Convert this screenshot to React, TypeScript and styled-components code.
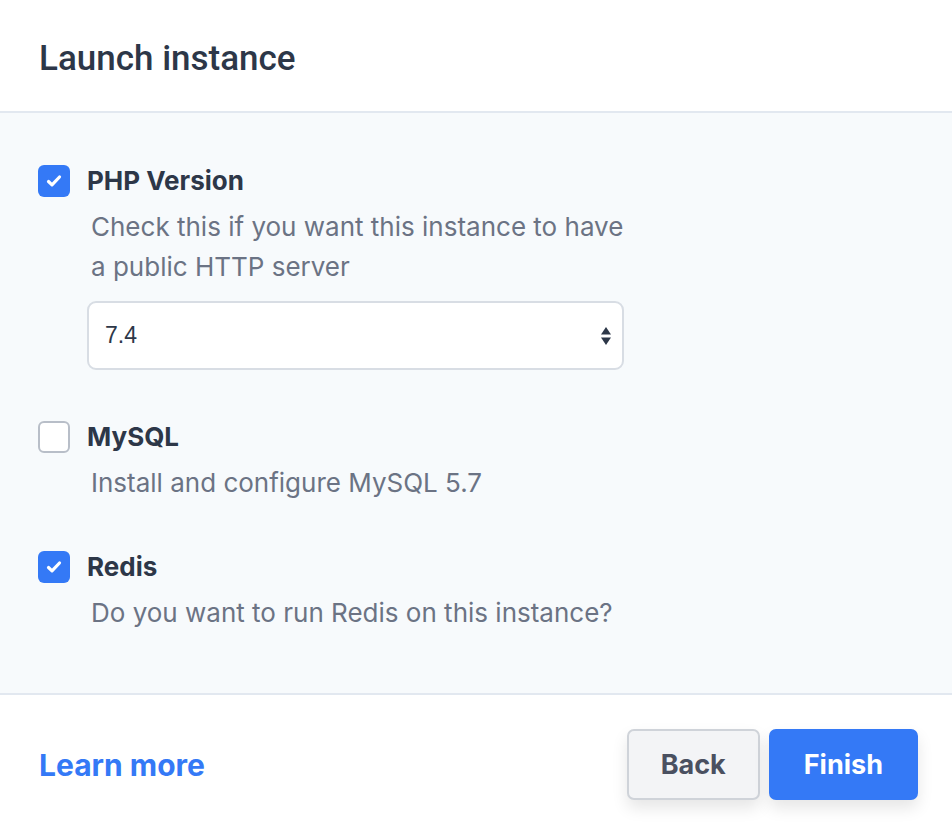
import React from "react";
import styled, { createGlobalStyle } from "styled-components";

const Global = createGlobalStyle`
  html, body { margin: 0; padding: 0; background: #ffffff; }
  body { font-family: Inter, "Noto Sans", sans-serif; }
  * { box-sizing: border-box; }
`;

const Panel = styled.div`
  width: 952px;
  height: 828px;
  display: flex;
  flex-direction: column;
  background: #ffffff;
`;

const Header = styled.header`
  height: 113px;
  padding: 0 39px;
  display: flex;
  align-items: center;
  border-bottom: 2px solid #e2e8f0;
`;

const Title = styled.h1`
  margin: 0;
  padding-top: 5px;
  font-family: Roboto, "Noto Sans", sans-serif;
  font-weight: 500;
  font-size: 35px;
  color: #2d3748;
`;

const Body = styled.main`
  flex: 1;
  background: #f7fafc;
  border-bottom: 2px solid #e2e8f0;
  padding: 52px 38px 0;
  display: flex;
  flex-direction: column;
  gap: 48px;
`;

const Option = styled.div`
  display: grid;
  grid-template-columns: 32px 1fr;
  column-gap: 17px;
`;

const Box = styled.span<{ $checked: boolean }>`
  width: 32px;
  height: 32px;
  border-radius: 6px;
  display: flex;
  align-items: center;
  justify-content: center;
  background: ${(p) => (p.$checked ? "#3479f6" : "#ffffff")};
  border: ${(p) => (p.$checked ? "none" : "2px solid #b8bec8")};
`;

const Label = styled.div`
  font-weight: 700;
  font-size: 26px;
  line-height: 32px;
  color: #2d3748;
`;

const Desc = styled.div`
  grid-column: 2;
  margin-top: 10px;
  padding-left: 4px;
  font-size: 26px;
  line-height: 40px;
  color: #6b7384;
  max-width: 545px;
`;

const SelectBox = styled.div`
  grid-column: 2;
  margin-top: 14px;
  margin-bottom: 3px;
  width: 537px;
  height: 69px;
  border: 2px solid #d8dde4;
  border-radius: 9px;
  background: #ffffff;
  display: flex;
  align-items: center;
  justify-content: space-between;
  padding: 0 9px 0 16px;
  font-family: "Liberation Sans", Arial, sans-serif;
  font-size: 23px;
  color: #2d3748;
`;

const Footer = styled.footer`
  height: 133px;
  display: flex;
  align-items: center;
  justify-content: space-between;
  padding: 6px 34px 0 39px;
`;

const Link = styled.a`
  font-weight: 700;
  font-size: 30px;
  color: #3479f6;
  text-decoration: none;
`;

const Actions = styled.div`
  display: flex;
  gap: 9px;
`;

const Button = styled.button<{ $primary?: boolean }>`
  height: 71px;
  padding: 0 ${(p) => (p.$primary ? "33px" : "32px")};
  border-radius: 7px;
  font-family: Inter, "Noto Sans", sans-serif;
  font-weight: 700;
  font-size: 27px;
  border: 2px solid ${(p) => (p.$primary ? "#3479f6" : "#cfd3d9")};
  background: ${(p) => (p.$primary ? "#3479f6" : "#f3f4f6")};
  color: ${(p) => (p.$primary ? "#ffffff" : "#4a5060")};
  box-shadow: 0 8px 16px rgba(0, 0, 0, 0.1);
`;

const Check = () => (
  <svg width="18" height="18" viewBox="0 0 18 18">
    <path d="M3.5 9.5l3.5 3.3 7.5-7.8" fill="none" stroke="#fff" strokeWidth="3.2" strokeLinecap="round" strokeLinejoin="round" />
  </svg>
);

const Arrows = () => (
  <svg width="14" height="28" viewBox="0 0 14 28">
    <path d="M2 12.5L7 5l5 7.5z" fill="#2d3748" />
    <path d="M2 15.5l5 7.5 5-7.5z" fill="#2d3748" />
  </svg>
);

export default function App() {
  return (
    <>
      <Global />
      <Panel>
        <Header>
          <Title>Launch instance</Title>
        </Header>
        <Body>
          <Option>
            <Box $checked><Check /></Box>
            <Label>PHP Version</Label>
            <Desc>Check this if you want this instance to have a public HTTP server</Desc>
            <SelectBox>
              <span>7.4</span>
              <Arrows />
            </SelectBox>
          </Option>
          <Option>
            <Box $checked={false} />
            <Label>MySQL</Label>
            <Desc>Install and configure MySQL 5.7</Desc>
          </Option>
          <Option>
            <Box $checked><Check /></Box>
            <Label>Redis</Label>
            <Desc>Do you want to run Redis on this instance?</Desc>
          </Option>
        </Body>
        <Footer>
          <Link href="#">Learn more</Link>
          <Actions>
            <Button>Back</Button>
            <Button $primary>Finish</Button>
          </Actions>
        </Footer>
      </Panel>
    </>
  );
}
